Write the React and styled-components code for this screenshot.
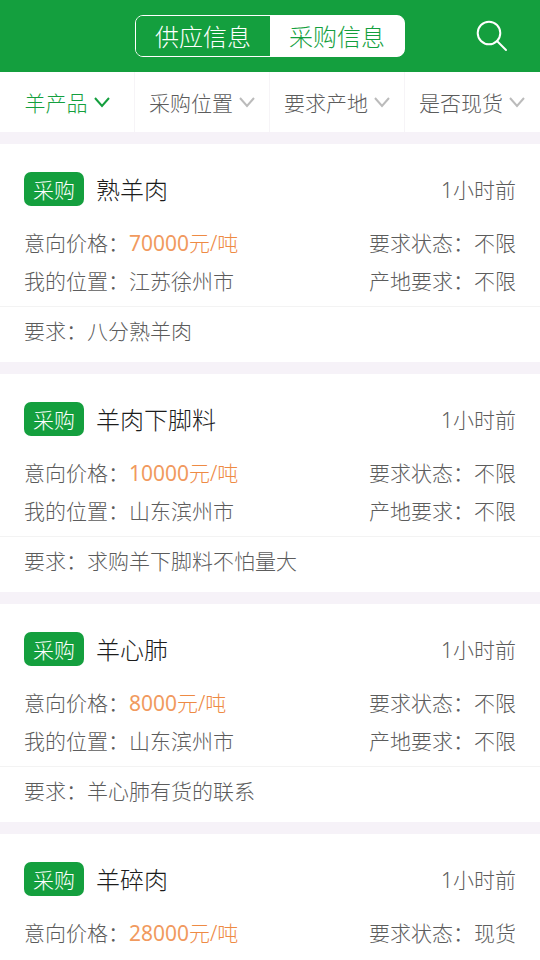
import React, { useState } from "react";
import styled, { createGlobalStyle } from "styled-components";

const GlobalStyle = createGlobalStyle`
  * { box-sizing: border-box; }
  body {
    margin: 0;
    background: #f6f2f8;
    color: #5c5c5c;
    font-family: "Noto Sans", "Noto Sans CJK SC", sans-serif;
    font-weight: 300;
  }
  button { font: inherit; border: 0; padding: 0; background: none; cursor: pointer; }
`;

const Page = styled.div`
  display: flex;
  flex-direction: column;
  min-height: 100vh;
`;

const Header = styled.header`
  display: grid;
  grid-template-columns: 1fr auto 1fr;
  align-items: center;
  height: 72px;
  padding: 0 32px;
  background: #149f3e;
`;

const Segments = styled.div`
  grid-column: 2;
  display: flex;
  height: 42px;
  border: 1px solid #fff;
  border-radius: 8px;
  background: linear-gradient(to right, #149f3e 50%, #fff 50%);
  overflow: hidden;
`;

const Segment = styled.button`
  width: 134px;
  font-size: 24px;
  line-height: 42px;
  color: ${(p) => (p.$active ? "#149f3e" : "#fff")};
  background: ${(p) => (p.$active ? "#fff" : "#149f3e")};
`;

const SearchButton = styled.button`
  justify-self: end;
  display: flex;
  color: #fff;
`;

const Filters = styled.nav`
  display: grid;
  grid-template-columns: repeat(4, 1fr);
  height: 60px;
  background: #fff;
`;

const Filter = styled.button`
  display: flex;
  align-items: center;
  justify-content: center;
  gap: 6px;
  font-size: 21px;
  white-space: nowrap;
  color: ${(p) => (p.$active ? "#149f3e" : "#5c5c5c")};
  border-right: 1px solid #f6f4f7;
  &:last-child { border-right-color: transparent; }
  svg { color: ${(p) => (p.$active ? "#149f3e" : "#bbb")}; }
`;

const List = styled.main`
  display: flex;
  flex-direction: column;
  gap: 12px;
  padding-top: 12px;
  height: calc(100vh - 132px);
  overflow: hidden;
`;

const Card = styled.article`
  flex: none;
  background: #fff;
`;

const CardTop = styled.div`
  display: flex;
  align-items: flex-start;
  padding: 28px 24px 0;
  line-height: 36px;
`;

const Badge = styled.span`
  width: 60px;
  height: 34px;
  border-radius: 7px;
  background: #149f3e;
  color: #fff;
  font-size: 21px;
  text-align: center;
`;

const Title = styled.h2`
  flex: 1;
  margin: 0 0 0 12px;
  font-size: 24px;
  line-height: 36px;
  font-weight: 300;
  color: #1c1c1c;
`;

const Time = styled.time`
  font-size: 21px;
`;

const Details = styled.div`
  min-height: 98px;
  padding: 16px 24px 6px;
  font-size: 21px;
  line-height: 38px;
`;

const Row = styled.div`
  display: flex;
  justify-content: space-between;
`;

const Price = styled.span`
  color: #ee8a44;
`;

const Figure = styled.span`
  font-weight: 400;
  color: #f19a5e;
`;

const Note = styled.p`
  margin: 0;
  padding: 0 24px 7px;
  border-top: 1px solid #f3f3f3;
  font-size: 21px;
  line-height: 48px;
`;

const Chevron = () => (
  <svg width="16" height="12" viewBox="0 0 16 12" fill="none" stroke="currentColor" strokeWidth="2" aria-hidden="true">
    <path d="M1 2l7 8 7-8" />
  </svg>
);

const filters = ["羊产品", "采购位置", "要求产地", "是否现货"];

const posts = [
  { title: "熟羊肉", price: 70000, place: "江苏徐州市", state: "不限", note: "八分熟羊肉" },
  { title: "羊肉下脚料", price: 10000, place: "山东滨州市", state: "不限", note: "求购羊下脚料不怕量大" },
  { title: "羊心肺", price: 8000, place: "山东滨州市", state: "不限", note: "羊心肺有货的联系" },
  { title: "羊碎肉", price: 28000, state: "现货" },
];

export default function App() {
  const [tab, setTab] = useState(1);
  return (
    <Page>
      <GlobalStyle />
      <Header>
        <Segments>
          {["供应信息", "采购信息"].map((label, i) => (
            <Segment key={label} $active={tab === i} onClick={() => setTab(i)}>{label}</Segment>
          ))}
        </Segments>
        <SearchButton aria-label="搜索">
          <svg width="32" height="32" viewBox="0 0 32 32" fill="none" stroke="currentColor" strokeWidth="2" strokeLinecap="round">
            <circle cx="13" cy="13" r="11.3" />
            <path d="M21 21l9 9" />
          </svg>
        </SearchButton>
      </Header>
      <Filters>
        {filters.map((label, i) => (
          <Filter key={label} $active={i === 0}>{label}<Chevron /></Filter>
        ))}
      </Filters>
      <List>
        {posts.map((post) => (
          <Card key={post.title}>
            <CardTop>
              <Badge>采购</Badge>
              <Title>{post.title}</Title>
              <Time>1小时前</Time>
            </CardTop>
            <Details>
              <Row>
                <span>意向价格：<Price><Figure>{post.price}</Figure>元/吨</Price></span>
                <span>要求状态：{post.state}</span>
              </Row>
              {post.place && (
                <Row>
                  <span>我的位置：{post.place}</span>
                  <span>产地要求：不限</span>
                </Row>
              )}
            </Details>
            {post.note && <Note>要求：{post.note}</Note>}
          </Card>
        ))}
      </List>
    </Page>
  );
}
